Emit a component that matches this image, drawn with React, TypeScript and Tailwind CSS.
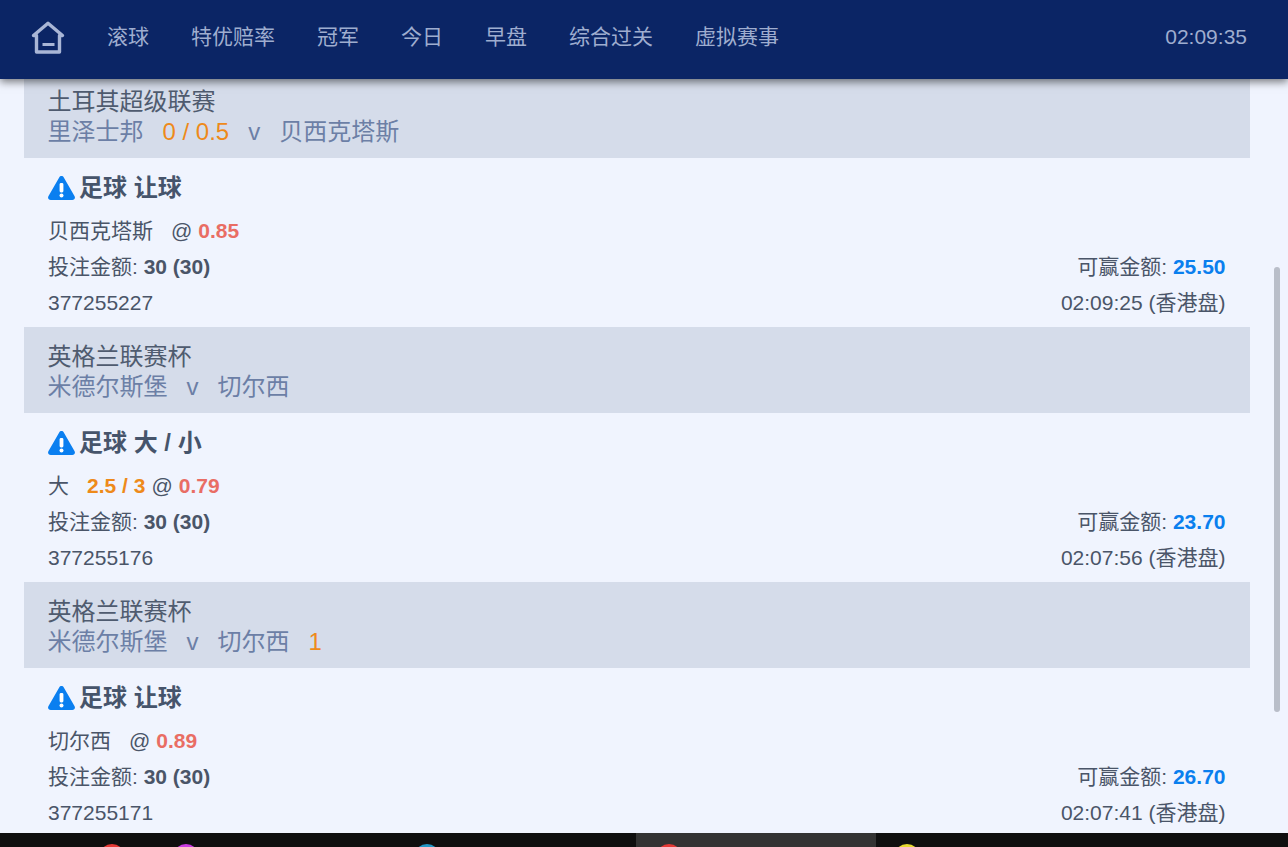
const FONT = "font-['Liberation_Sans','Noto_Sans_CJK_SC',sans-serif]";

function HomeIcon() {
  return (
    <svg width="36" height="34" viewBox="0 0 36 34" fill="none" stroke="#a9b6d6" strokeWidth="3.4" className="shrink-0">
      <path d="M6.500 32V15.500H3.500L18 3.300 32.500 15.500H29.500V32Z" strokeLinejoin="round" />
      <path d="M12.500 24.500H24.500" strokeWidth="3" />
    </svg>
  );
}

function WarnIcon() {
  return (
    <svg width="27" height="24" viewBox="0 0 27 24" className="shrink-0">
      <path d="M11.2 1.4c1-1.8 3.6-1.8 4.6 0l10.8 18.8c1 1.8-.3 3.8-2.3 3.8H2.700C.7 24-.6 22 .4 20.200Z" fill="#0a7ff0" />
      <rect x="11.600" y="7" width="3.800" height="9.500" rx="1.400" fill="#fff" />
      <circle cx="13.500" cy="19.500" r="2" fill="#fff" />
    </svg>
  );
}

type Bet = {
  league: string;
  home: string;
  handicapMid?: string;
  away: string;
  trail?: string;
  market: string;
  pick: string;
  line?: string;
  odds: string;
  win: string;
  id: string;
  time: string;
};

const bets: Bet[] = [
  { league: "土耳其超级联赛", home: "里泽士邦", handicapMid: "0 / 0.5", away: "贝西克塔斯", market: "足球 让球", pick: "贝西克塔斯", odds: "0.85", win: "25.50", id: "377255227", time: "02:09:25 (香港盘)" },
  { league: "英格兰联赛杯", home: "米德尔斯堡", away: "切尔西", market: "足球 大 / 小", pick: "大", line: "2.5 / 3", odds: "0.79", win: "23.70", id: "377255176", time: "02:07:56 (香港盘)" },
  { league: "英格兰联赛杯", home: "米德尔斯堡", away: "切尔西", trail: "1", market: "足球 让球", pick: "切尔西", odds: "0.89", win: "26.70", id: "377255171", time: "02:07:41 (香港盘)" },
];

const nav = ["滚球", "特优赔率", "冠军", "今日", "早盘", "综合过关", "虚拟赛事"];

function BetBlock({ b }: { b: Bet }) {
  return (
    <section className="text-[21px] text-[#4a5568]">
      <div className="bg-[#d5dcea] px-6 pt-[14px] pb-[11px]">
        <div className="-ml-[0.5px] text-[24px] leading-[31px] text-[#4f5b6f]">{b.league}</div>
        <div className="-ml-[0.5px] flex gap-[19px] text-[24px] leading-[30px] text-[#6c7fa6]">
          <span>{b.home}</span>
          {b.handicapMid && <span className="text-[#ee8a1a]">{b.handicapMid}</span>}
          <span>v</span>
          <span>{b.away}</span>
          {b.trail && <span className="text-[#ee8a1a]">{b.trail}</span>}
        </div>
      </div>
      <div className="pt-3 pr-[24.5px] pb-[6px] pl-6">
        <div className="mb-[7px] flex h-9 items-center gap-1 text-[24px] font-bold text-[#46546b]">
          <WarnIcon />
          <span>{b.market}</span>
        </div>
        <div className="flex h-9 items-center">
          <span>{b.pick}</span>
          {b.line && <b className="ml-[18px] text-[#ee8a1a]">{b.line}</b>}
          <span className={b.line ? "ml-[6px]" : "ml-[18px]"}>@</span>
          <b className="ml-[6px] text-[#e96d64]">{b.odds}</b>
        </div>
        <div className="flex h-9 items-center justify-between">
          <span>
            投注金额: <b>30 (30)</b>
          </span>
          <span>
            可赢金额: <b className="text-[#0a7fee]">{b.win}</b>
          </span>
        </div>
        <div className="flex h-9 items-center justify-between">
          <span>{b.id}</span>
          <span>{b.time}</span>
        </div>
      </div>
    </section>
  );
}

export default function App() {
  return (
    <div className={`${FONT} relative flex h-[847px] w-[1288px] flex-col overflow-hidden bg-[#f0f4fe]`}>
      <header className="relative z-10 flex h-[79px] shrink-0 items-center bg-[#0b2565] pr-[41px] pb-[6px] pl-[30px] text-[21px] text-[#9fadcf] shadow-[0_3px_8px_rgba(0,0,0,0.5)]">
        <HomeIcon />
        <nav className="ml-[41px] flex gap-[42px]">
          {nav.map((n) => (
            <span key={n}>{n}</span>
          ))}
        </nav>
        <span className="ml-auto">02:09:35</span>
      </header>
      <main className="min-h-0 flex-1 overflow-hidden pr-[38px] pl-6">
        <div className="-mt-[7px]">
          {bets.map((b) => (
            <BetBlock key={b.id} b={b} />
          ))}
        </div>
      </main>
      <div className="absolute top-[267px] left-[1274px] h-[445px] w-[6px] rounded-full bg-[#b9bec9]" />
      <footer className="flex h-[14px] shrink-0 overflow-hidden bg-[#0f0f0f]">
        <i className="mt-[11px] ml-[99px] size-[26px] shrink-0 rounded-full bg-[#e53935]" />
        <i className="mt-[11px] ml-[48px] size-[26px] shrink-0 rounded-full bg-[#c93be0]" />
        <i className="mt-[11px] ml-[215px] size-[26px] shrink-0 rounded-full bg-[#2196c4]" />
        <div className="ml-[196px] flex w-[240px] shrink-0 bg-[#333333]">
          <i className="mt-[11px] ml-[20px] size-[26px] shrink-0 rounded-full bg-[#e53935]" />
        </div>
        <i className="mt-[11px] ml-[18px] size-[26px] shrink-0 rounded-full bg-[#e6d92f]" />
      </footer>
    </div>
  );
}
